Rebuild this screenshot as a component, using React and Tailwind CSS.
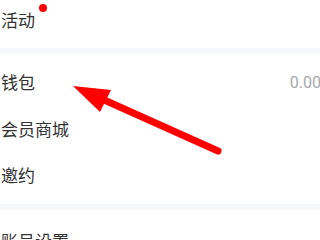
const FONT = { fontFamily: 'Roboto, "Noto Sans CJK SC", sans-serif' };

const Row = ({ label, value, dot, className = 'h-[46.5px]' }) => (
  <div className={`flex items-center justify-between pl-px ${className}`}>
    <span className="relative text-[17px] leading-[22px] text-[#333333]">
      {label}
      {dot && <span className="absolute left-[38px] top-[-6px] w-2 h-2 rounded-full bg-[#ff0000]" />}
    </span>
    {value && <span className="-mr-[1px] text-[16px] leading-[22px] text-[#a6a9ae]">{value}</span>}
  </div>
);

const Band = () => <div className="h-[6px] bg-[#f6f8fb]" />;

export default function App() {
  return (
    <div className="relative w-[320px] h-[240px] overflow-hidden bg-white" style={FONT}>
      <div className="h-[48px]">
        <Row label="活动" dot className="h-[41px]" />
      </div>
      <Band />
      <div className="pt-[6px] pb-[4.5px]">
        <Row label="钱包" value="0.00" />
        <Row label="会员商城" />
        <Row label="邀约" />
      </div>
      <Band />
      <div className="pt-[9px]">
        <Row label="账号设置" />
      </div>

      <svg className="absolute inset-0 pointer-events-none" width="320" height="240" viewBox="0 0 320 240">
        <line x1="218" y1="151" x2="102" y2="99" stroke="#ff0000" strokeWidth="7" strokeLinecap="round" />
        <polygon points="73,86 111,90 100,112" fill="#ff0000" />
      </svg>
    </div>
  );
}
